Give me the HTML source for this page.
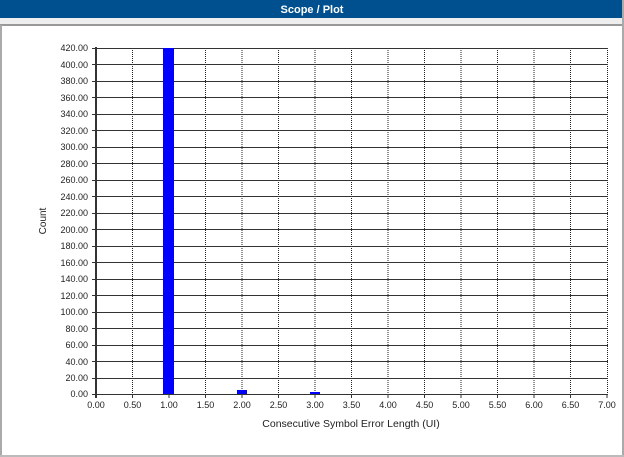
<!DOCTYPE html>
<html><head><meta charset="utf-8"><style>
html,body{margin:0;padding:0;width:624px;height:457px;overflow:hidden;background:#fff;font-family:"Liberation Sans",sans-serif}
</style></head><body>
<svg width="624" height="457" xmlns="http://www.w3.org/2000/svg" font-family="Liberation Sans, sans-serif">
<rect x="0" y="0" width="624" height="457" fill="#fff"/>
<rect x="0" y="0" width="624" height="18" fill="#00508f"/>
<text x="312" y="13" text-anchor="middle" fill="#fff" font-size="11" font-weight="bold">Scope / Plot</text>
<rect x="0" y="18" width="624" height="7" fill="#eeeeee"/>
<rect x="0" y="24" width="624" height="2" fill="#999"/>
<rect x="0" y="25" width="2" height="432" fill="#aaa"/>
<rect x="622" y="0" width="2" height="457" fill="#aaa"/>
<rect x="0" y="455" width="624" height="2" fill="#bbb"/>
<g stroke="#222" stroke-width="1" stroke-dasharray="1,1">
<line x1="132.5" y1="48" x2="132.5" y2="394"/><line x1="169" y1="48" x2="169" y2="394"/><line x1="205.5" y1="48" x2="205.5" y2="394"/><line x1="242" y1="48" x2="242" y2="394"/><line x1="278.5" y1="48" x2="278.5" y2="394"/><line x1="315" y1="48" x2="315" y2="394"/><line x1="351.5" y1="48" x2="351.5" y2="394"/><line x1="388" y1="48" x2="388" y2="394"/><line x1="424.5" y1="48" x2="424.5" y2="394"/><line x1="461" y1="48" x2="461" y2="394"/><line x1="497.5" y1="48" x2="497.5" y2="394"/><line x1="534" y1="48" x2="534" y2="394"/><line x1="570.5" y1="48" x2="570.5" y2="394"/><line x1="607.5" y1="48" x2="607.5" y2="394"/>
</g>
<g stroke="#333" stroke-width="1">
<line x1="92" y1="48.5" x2="608" y2="48.5"/><line x1="92" y1="64.5" x2="608" y2="64.5"/><line x1="92" y1="81.5" x2="608" y2="81.5"/><line x1="92" y1="97.5" x2="608" y2="97.5"/><line x1="92" y1="114.5" x2="608" y2="114.5"/><line x1="92" y1="130.5" x2="608" y2="130.5"/><line x1="92" y1="147.5" x2="608" y2="147.5"/><line x1="92" y1="163.5" x2="608" y2="163.5"/><line x1="92" y1="180.5" x2="608" y2="180.5"/><line x1="92" y1="196.5" x2="608" y2="196.5"/><line x1="92" y1="229.5" x2="608" y2="229.5"/><line x1="92" y1="213.5" x2="608" y2="213.5"/><line x1="92" y1="246.5" x2="608" y2="246.5"/><line x1="92" y1="262.5" x2="608" y2="262.5"/><line x1="92" y1="279.5" x2="608" y2="279.5"/><line x1="92" y1="295.5" x2="608" y2="295.5"/><line x1="92" y1="312.5" x2="608" y2="312.5"/><line x1="92" y1="328.5" x2="608" y2="328.5"/><line x1="92" y1="345.5" x2="608" y2="345.5"/><line x1="92" y1="361.5" x2="608" y2="361.5"/><line x1="92" y1="378.5" x2="608" y2="378.5"/><line x1="92" y1="394.5" x2="608" y2="394.5"/>
</g>
<line x1="96" y1="47" x2="96" y2="398" stroke="#333" stroke-width="2"/>
<g stroke="#333"><line x1="132.5" y1="394" x2="132.5" y2="398"/><line x1="169" y1="394" x2="169" y2="398"/><line x1="205.5" y1="394" x2="205.5" y2="398"/><line x1="242" y1="394" x2="242" y2="398"/><line x1="278.5" y1="394" x2="278.5" y2="398"/><line x1="315" y1="394" x2="315" y2="398"/><line x1="351.5" y1="394" x2="351.5" y2="398"/><line x1="388" y1="394" x2="388" y2="398"/><line x1="424.5" y1="394" x2="424.5" y2="398"/><line x1="461" y1="394" x2="461" y2="398"/><line x1="497.5" y1="394" x2="497.5" y2="398"/><line x1="534" y1="394" x2="534" y2="398"/><line x1="570.5" y1="394" x2="570.5" y2="398"/><line x1="607" y1="394" x2="607" y2="398"/></g>
<rect x="163" y="48" width="11" height="346" fill="#0000ff"/>
<rect x="237" y="390" width="10" height="4" fill="#0000ff"/>
<rect x="310" y="392" width="10" height="2" fill="#0000ff"/>
<g font-size="9" fill="#222" text-anchor="end">
<text x="88" y="51">420.00</text><text x="88" y="68">400.00</text><text x="88" y="84">380.00</text><text x="88" y="101">360.00</text><text x="88" y="117">340.00</text><text x="88" y="134">320.00</text><text x="88" y="150">300.00</text><text x="88" y="167">280.00</text><text x="88" y="183">260.00</text><text x="88" y="200">240.00</text><text x="88" y="216">220.00</text><text x="88" y="233">200.00</text><text x="88" y="249">180.00</text><text x="88" y="266">160.00</text><text x="88" y="282">140.00</text><text x="88" y="299">120.00</text><text x="88" y="315">100.00</text><text x="88" y="332">80.00</text><text x="88" y="348">60.00</text><text x="88" y="365">40.00</text><text x="88" y="381">20.00</text><text x="88" y="397">0.00</text>
</g>
<g font-size="9" fill="#222" text-anchor="middle">
<text x="96" y="408">0.00</text><text x="132.5" y="408">0.50</text><text x="169" y="408">1.00</text><text x="205.5" y="408">1.50</text><text x="242" y="408">2.00</text><text x="278.5" y="408">2.50</text><text x="315" y="408">3.00</text><text x="351.5" y="408">3.50</text><text x="388" y="408">4.00</text><text x="424.5" y="408">4.50</text><text x="461" y="408">5.00</text><text x="497.5" y="408">5.50</text><text x="534" y="408">6.00</text><text x="570.5" y="408">6.50</text><text x="607" y="408">7.00</text>
</g>
<text x="351" y="427" font-size="10.5" fill="#222" text-anchor="middle">Consecutive Symbol Error Length (UI)</text>
<text transform="translate(46,221) rotate(-90)" font-size="10" fill="#222" text-anchor="middle">Count</text>
</svg>
</body></html>
